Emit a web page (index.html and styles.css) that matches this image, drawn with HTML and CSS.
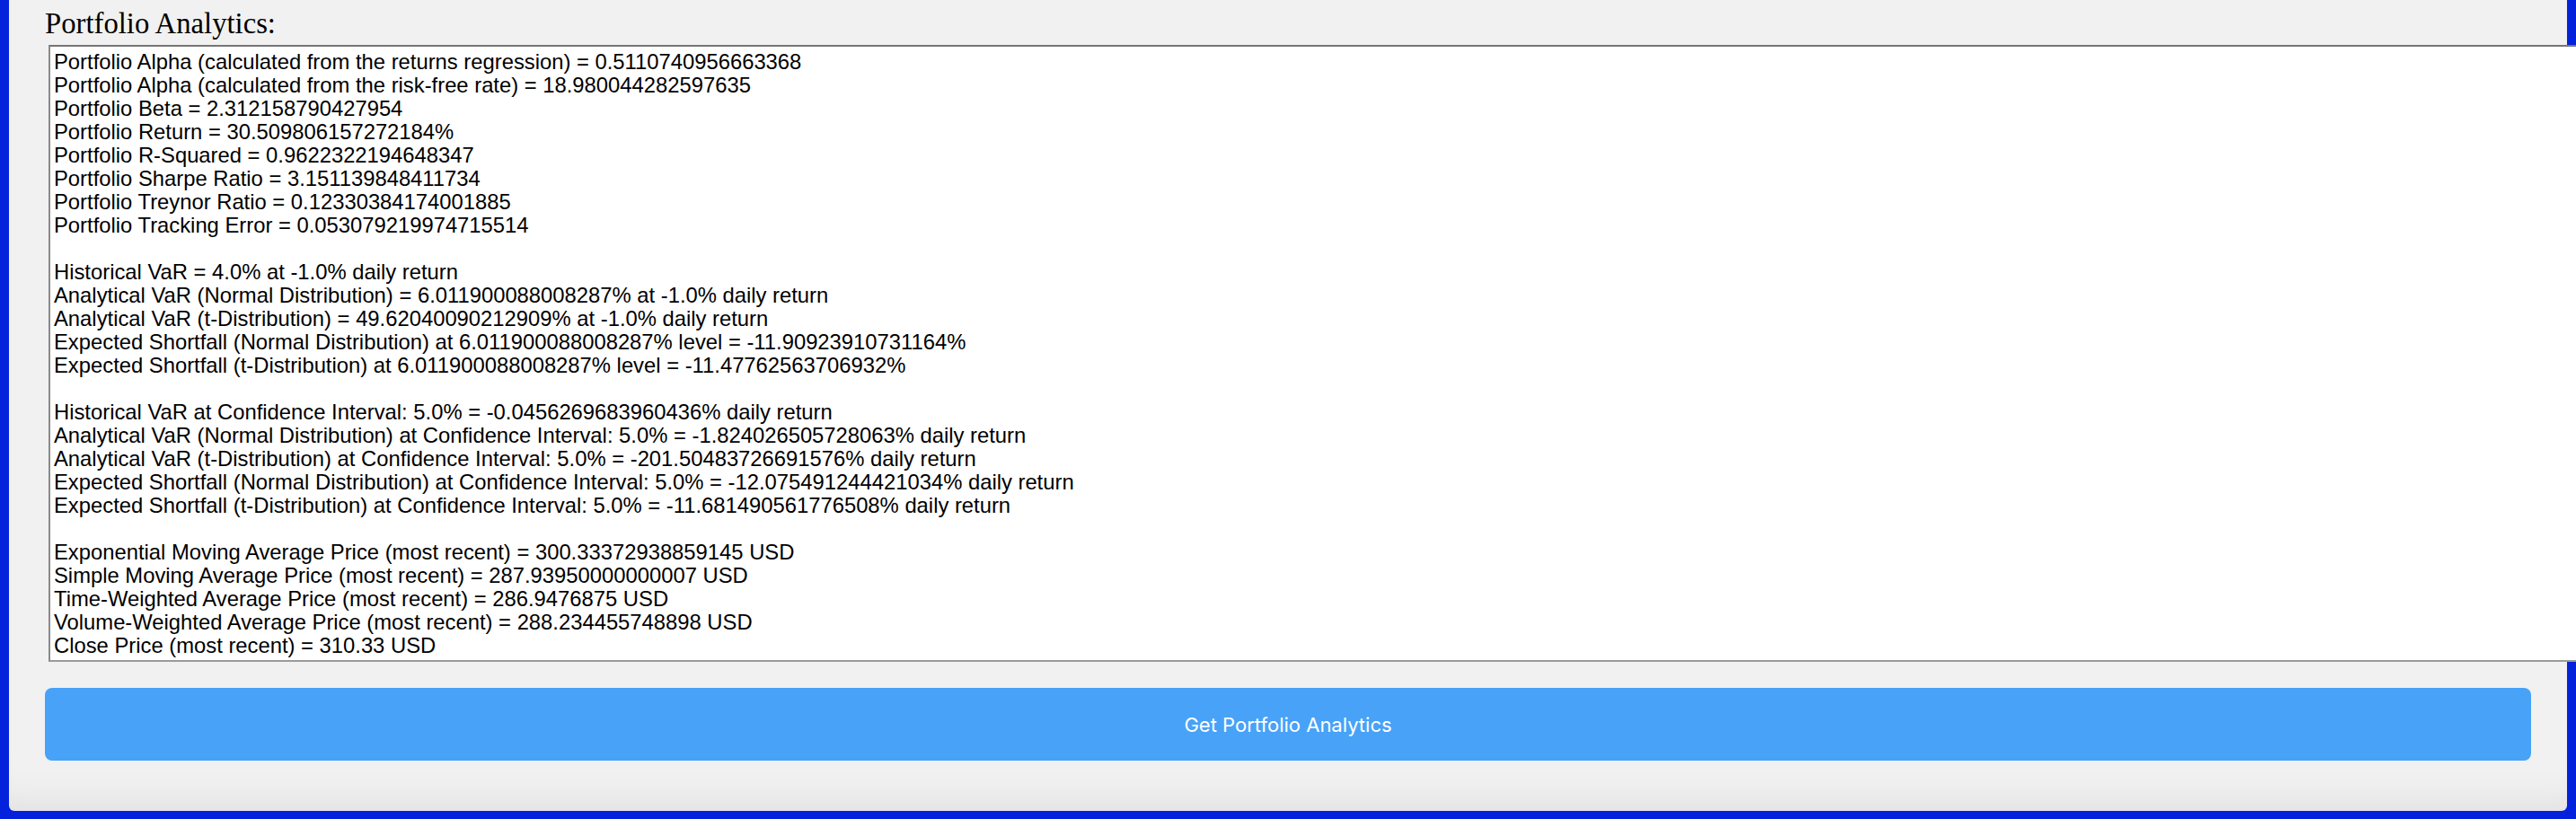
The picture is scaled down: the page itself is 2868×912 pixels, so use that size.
FILE: index.html
```html
<!DOCTYPE html>
<html lang="en">
<head>
<meta charset="utf-8">
<title>Portfolio Analytics</title>
<link rel="stylesheet" href="styles.css">
</head>
<body>
<div class="panel">
<label class="heading">Portfolio Analytics:</label>
<div class="output">Portfolio Alpha (calculated from the returns regression) = 0.5110740956663368
Portfolio Alpha (calculated from the risk-free rate) = 18.980044282597635
Portfolio Beta = 2.312158790427954
Portfolio Return = 30.509806157272184%
Portfolio R-Squared = 0.9622322194648347
Portfolio Sharpe Ratio = 3.151139848411734
Portfolio Treynor Ratio = 0.12330384174001885
Portfolio Tracking Error = 0.053079219974715514

Historical VaR = 4.0% at -1.0% daily return
Analytical VaR (Normal Distribution) = 6.011900088008287% at -1.0% daily return
Analytical VaR (t-Distribution) = 49.62040090212909% at -1.0% daily return
Expected Shortfall (Normal Distribution) at 6.011900088008287% level = -11.90923910731164%
Expected Shortfall (t-Distribution) at 6.011900088008287% level = -11.47762563706932%

Historical VaR at Confidence Interval: 5.0% = -0.0456269683960436% daily return
Analytical VaR (Normal Distribution) at Confidence Interval: 5.0% = -1.824026505728063% daily return
Analytical VaR (t-Distribution) at Confidence Interval: 5.0% = -201.50483726691576% daily return
Expected Shortfall (Normal Distribution) at Confidence Interval: 5.0% = -12.075491244421034% daily return
Expected Shortfall (t-Distribution) at Confidence Interval: 5.0% = -11.681490561776508% daily return

Exponential Moving Average Price (most recent) = 300.33372938859145 USD
Simple Moving Average Price (most recent) = 287.93950000000007 USD
Time-Weighted Average Price (most recent) = 286.9476875 USD
Volume-Weighted Average Price (most recent) = 288.234455748898 USD
Close Price (most recent) = 310.33 USD</div>
<button class="action" type="button">Get Portfolio Analytics</button>
</div>
</body>
</html>
```

FILE: styles.css
```css
html, body {
  margin: 0;
  padding: 0;
  overflow: hidden;
}

body {
  background: #0422dc;
  height: 912px;
}

.panel {
  box-sizing: border-box;
  width: 2848px;
  margin-left: 10px;
  padding: 8px 40px 56px 40px;
  background: #f1f1f1;
  border-radius: 0 0 6px 6px;
  box-shadow: inset 0 -40px 40px -30px rgba(0, 0, 0, 0.07);
}

.heading {
  display: block;
  font-family: "Liberation Serif", "Times New Roman", serif;
  font-size: 32.7px;
  line-height: 36px;
  color: #000;
  margin-bottom: 6px;
}

.output {
  box-sizing: border-box;
  width: 2900px;
  height: 687px;
  margin-left: 4px;
  padding: 4px 4px 3px 4px;
  background: #fff;
  border-style: solid;
  border-width: 2px;
  border-color: #767676 #8f8f8f #9b9b9b #8a8a8a;
  font-family: "Liberation Sans", Arial, Helvetica, sans-serif;
  font-size: 23.8px;
  line-height: 26px;
  color: #000;
  white-space: pre;
  overflow: hidden;
}

.action {
  display: flex;
  align-items: center;
  justify-content: center;
  width: 100%;
  height: 81px;
  margin-top: 29px;
  border: none;
  border-radius: 8px;
  background: #47a2f8;
  color: #fff;
  font-family: Inter, "Liberation Sans", sans-serif;
  font-size: 22px;
  padding: 0;
}
```
